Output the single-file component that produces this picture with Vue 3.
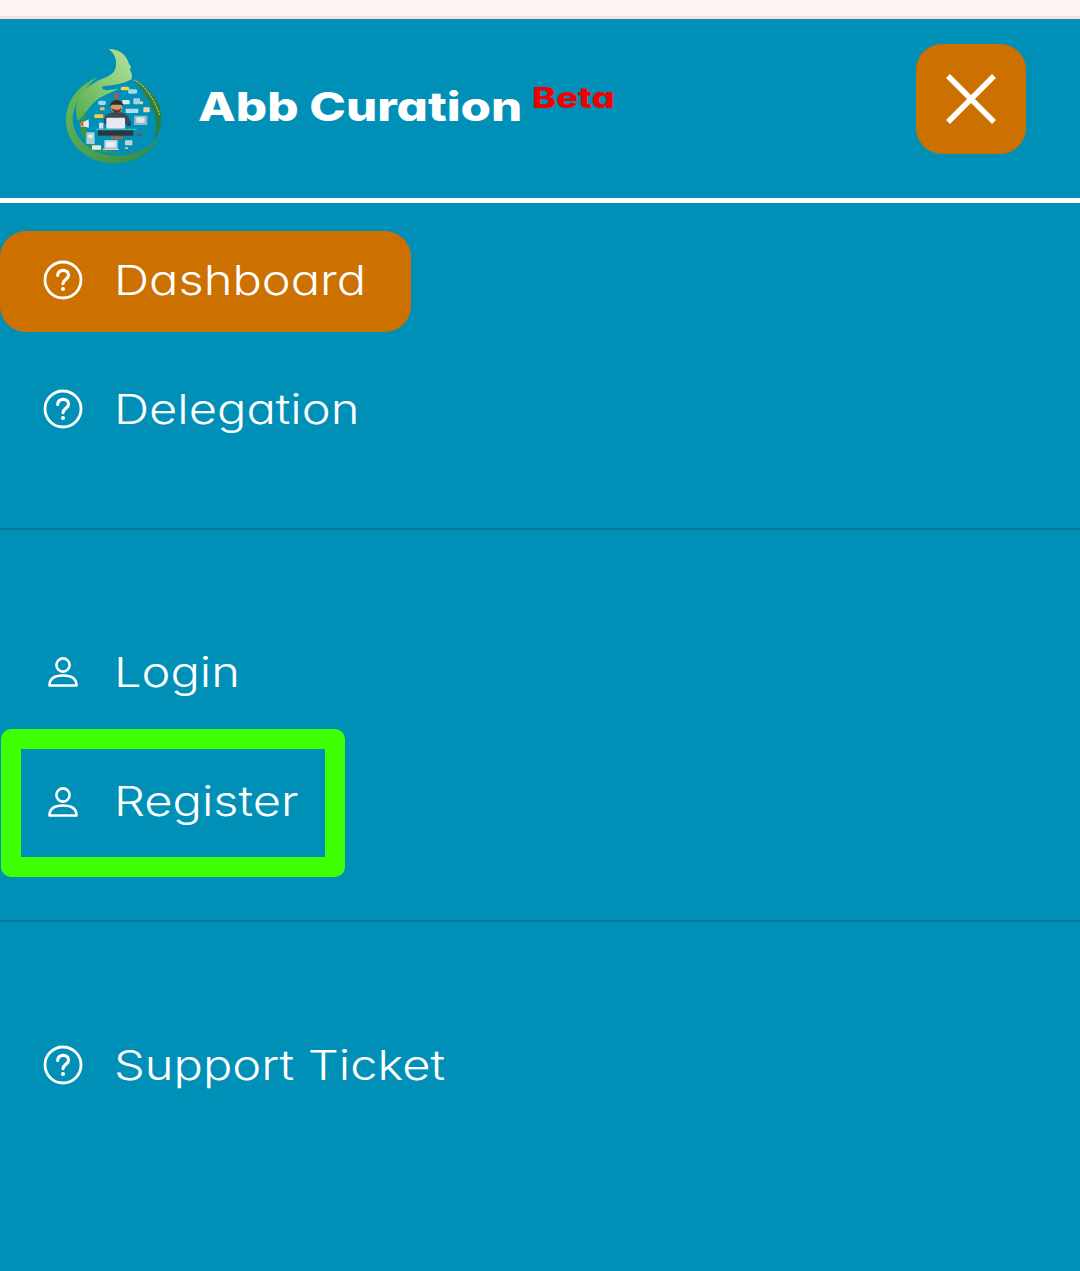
<script setup>
const items = [
  [182, 128, 26, 11, '#f2d64b', 5], [204, 136, 28, 13, '#9fdcf0', 6], [163, 148, 12, 18, '#c0583c', 6],
  [187, 168, 22, 13, '#dbe8ee', 2], [220, 163, 20, 18, '#a5cfe0', 3], [240, 172, 9, 9, '#e8d27a', 2],
  [197, 194, 38, 13, '#b5dcee', 2], [114, 170, 24, 13, '#9fdcf0', 6], [120, 190, 14, 9, '#e8c84a', 2],
  [103, 211, 27, 11, '#f0d040', 1], [62, 236, 24, 12, '#e6e6e6', 2], [117, 236, 13, 18, '#cfe3ea', 2],
  [222, 215, 40, 28, '#8fb8cf', 2], [229, 220, 25, 16, '#d8e6ee', 1], [250, 190, 19, 15, '#e5d6a8', 2],
  [79, 265, 25, 35, '#a9cfde', 2], [85, 272, 13, 10, '#e6f0f3', 1], [96, 304, 27, 13, '#e6e6e6', 2],
  [133, 288, 40, 26, '#b4d4e2', 2], [139, 293, 28, 16, '#e8eef2', 1], [129, 314, 48, 4, '#d4d4d4', 1],
  [153, 278, 36, 7, '#d9552b', 1], [195, 289, 22, 15, '#c9d2d6', 2], [205, 262, 14, 4, '#a4553a', 1],
  [232, 270, 14, 7, '#6b5a50', 1], [235, 256, 10, 5, '#5d6a70', 1], [200, 230, 12, 16, '#2e3a40', 3],
  [210, 317, 10, 5, '#9a6a50', 1], [195, 310, 9, 5, '#e8d27a', 1]
]
</script>

<template>
  <div class="page">
    <div class="strip"></div>
    <header class="head">
      <div class="brand">
        <svg class="logo" width="106" height="124" viewBox="0 0 318 372">
          <defs>
            <linearGradient id="leafG" x1="0" y1="1" x2="1" y2="0">
              <stop offset="0" stop-color="#55ab4e" />
              <stop offset=".55" stop-color="#8ccb78" />
              <stop offset="1" stop-color="#b4e29c" />
            </linearGradient>
            <linearGradient id="ringG" x1="0" y1="0" x2="1" y2="1">
              <stop offset="0" stop-color="#6abf5e" />
              <stop offset="1" stop-color="#348a3e" />
            </linearGradient>
          </defs>
          <path d="M112 100 C52 124 16 178 18 232 C20 308 92 360 166 358 C224 356 274 328 296 280 C266 316 222 336 170 336 C102 336 40 290 38 226 C37 186 66 140 112 100 Z" fill="url(#ringG)" />
          <path d="M86 190 C58 214 52 250 72 284 C94 320 140 334 190 326 C150 326 104 310 84 276 C70 250 72 216 86 190 Z" fill="#3f9440" />
          <path d="M216 104 C268 128 302 170 304 214 C305 246 296 272 280 292 C290 262 292 232 280 200 C268 168 244 130 216 104 Z" fill="#2f7f3a" />
          <path d="M146 15 C178 15 200 32 206 58 L214 70 L209 76 C215 86 217 96 215 106 C190 120 158 124 128 127 C122 134 134 140 146 138 L176 134 C140 152 112 160 92 186 C80 202 66 216 54 232 C44 206 46 176 62 150 C80 128 112 108 142 98 C162 88 170 76 168 52 C166 36 158 24 146 15 Z" fill="url(#leafG)" />
          <path d="M222 108 Q270 130 300 215" fill="none" stroke="#c7c25a" stroke-width="4" stroke-dasharray="5 3" />
          <rect v-for="(it, i) in items" :key="i" :x="it[0]" :y="it[1]" :width="it[2]" :height="it[3]" :fill="it[4]" :rx="it[5]" />
          <path d="M132 225 Q136 205 170 205 Q204 205 208 225 V240 H132 Z" fill="#3b4a52" />
          <circle cx="170" cy="190" r="18" fill="#d09a74" />
          <path d="M150 188 Q152 168 170 168 Q188 168 190 188 L184 182 H156 Z" fill="#3a2a20" />
          <path d="M153 192 Q170 226 187 192 Q170 204 153 192 Z" fill="#5a3a28" />
          <rect x="139" y="221" width="56" height="33" rx="2" fill="#e8e8f2" />
          <rect x="108" y="254" width="122" height="5" fill="#39b6c4" />
          <rect x="114" y="259" width="106" height="16" fill="#30353a" />
          <path d="M58 240 L86 226 V252 Z" fill="#e8e8e8" />
          <path d="M58 240 L70 234 V248 Z" fill="#d9552b" />
        </svg>
        <span class="title"><span class="title-txt">Abb Curation</span></span>
        <span class="beta"><span class="beta-txt">Beta</span></span>
      </div>
      <button class="close" aria-label="Close">
        <svg width="50" height="50" viewBox="0 0 50 50">
          <path d="M2 2 L48 48 M48 2 L2 48" stroke="#fff" stroke-width="5.5" fill="none" />
        </svg>
      </button>
    </header>

    <nav>
      <section class="sec first">
        <a class="row active">
          <svg class="ic" width="40" height="40" viewBox="0 0 40 40" fill="none" stroke="#fff" stroke-width="2.8" stroke-linecap="round"><circle cx="20" cy="20" r="18" /><path d="M14.6 15.4 C14.8 8.6 25.6 8.8 25.6 15 C25.6 19 20.4 19.3 20 23.6" stroke-width="3.2" /><circle cx="20" cy="29" r="2" fill="#fff" stroke="none" /></svg>
          <span class="label">Dashboard</span>
        </a>
        <a class="row">
          <svg class="ic" width="40" height="40" viewBox="0 0 40 40" fill="none" stroke="#fff" stroke-width="2.8" stroke-linecap="round"><circle cx="20" cy="20" r="18" /><path d="M14.6 15.4 C14.8 8.6 25.6 8.8 25.6 15 C25.6 19 20.4 19.3 20 23.6" stroke-width="3.2" /><circle cx="20" cy="29" r="2" fill="#fff" stroke="none" /></svg>
          <span class="label">Delegation</span>
        </a>
      </section>

      <section class="sec second">
        <a class="row">
          <svg class="ic" width="40" height="40" viewBox="0 0 40 40" fill="none" stroke="#fff" stroke-width="2.6" stroke-linejoin="round"><circle cx="20" cy="13" r="6.6" /><path d="M6.5 33.5 C6.5 26 12 23.5 20 23.5 C28 23.5 33.5 26 33.5 33.5 Z" /></svg>
          <span class="label">Login</span>
        </a>
        <a class="row boxed">
          <svg class="ic" width="40" height="40" viewBox="0 0 40 40" fill="none" stroke="#fff" stroke-width="2.6" stroke-linejoin="round"><circle cx="20" cy="13" r="6.6" /><path d="M6.5 33.5 C6.5 26 12 23.5 20 23.5 C28 23.5 33.5 26 33.5 33.5 Z" /></svg>
          <span class="label">Register</span>
        </a>
      </section>

      <section class="sec third">
        <a class="row">
          <svg class="ic" width="40" height="40" viewBox="0 0 40 40" fill="none" stroke="#fff" stroke-width="2.8" stroke-linecap="round"><circle cx="20" cy="20" r="18" /><path d="M14.6 15.4 C14.8 8.6 25.6 8.8 25.6 15 C25.6 19 20.4 19.3 20 23.6" stroke-width="3.2" /><circle cx="20" cy="29" r="2" fill="#fff" stroke="none" /></svg>
          <span class="label">Support Ticket</span>
        </a>
      </section>
    </nav>
  </div>
</template>

<style>
html, body { margin: 0; background: #0090b7; }
</style>

<style scoped>
.page {
  width: 1080px;
  height: 1271px;
  overflow: hidden;
  background: #0090b7;
  font-family: "Inter", "Liberation Sans", sans-serif;
  font-feature-settings: "cv11" 1;
  color: #fff;
}
.strip {
  height: 16px;
  background: #fff5f3;
  border-bottom: 3px solid #f8e0dc;
}
.head {
  height: 179px;
  display: flex;
  align-items: center;
  justify-content: space-between;
  padding: 0 54px 0 60px;
  border-bottom: 5px solid #fff;
}
.brand {
  display: flex;
  align-items: flex-start;
  margin-bottom: 5px;
}
.logo { display: block; }
.title {
  width: 334px;
  margin-left: 32px;
  margin-top: 40px;
  font-size: 40px;
  font-weight: 800;
  line-height: 46px;
  white-space: nowrap;
}
.title-txt, .beta-txt, .label {
  display: inline-block;
  transform-origin: left center;
  white-space: nowrap;
}
.title-txt { transform: scaleX(1.23); }
.beta {
  margin-top: 38px;
  font-size: 28px;
  line-height: 32px;
  font-weight: 800;
  color: #f00000;
}
.beta-txt { transform: scaleX(1.3); }
.close {
  width: 110px;
  height: 110px;
  border: 0;
  padding: 0;
  border-radius: 26px;
  background: #cc7000;
  display: flex;
  align-items: center;
  justify-content: center;
  margin-bottom: 19px;
}
.sec { border-bottom: 2px solid #0a7a9b; }
.third { border-bottom: 0; }
.first { padding: 28px 0 67px; }
.second { padding: 93px 0 43px; }
.third { padding-top: 94px; }
.first .row + .row { margin-top: 28px; }
.row {
  box-sizing: border-box;
  height: 101px;
  display: flex;
  align-items: center;
  gap: 31px;
  padding-left: 43px;
  padding-bottom: 3px;
  font-size: 41px;
  font-weight: 350;
}
.active {
  width: 411px;
  background: #cc7000;
  border-radius: 26px;
}
.boxed {
  width: 344px;
  height: 148px;
  margin-top: 5px;
  margin-left: 1px;
  padding-left: 22px;
  border: 20px solid #40ff00;
  border-radius: 10px;
}
.ic { flex: none; }
.label { transform: scaleX(1.19); line-height: 1; }
</style>
